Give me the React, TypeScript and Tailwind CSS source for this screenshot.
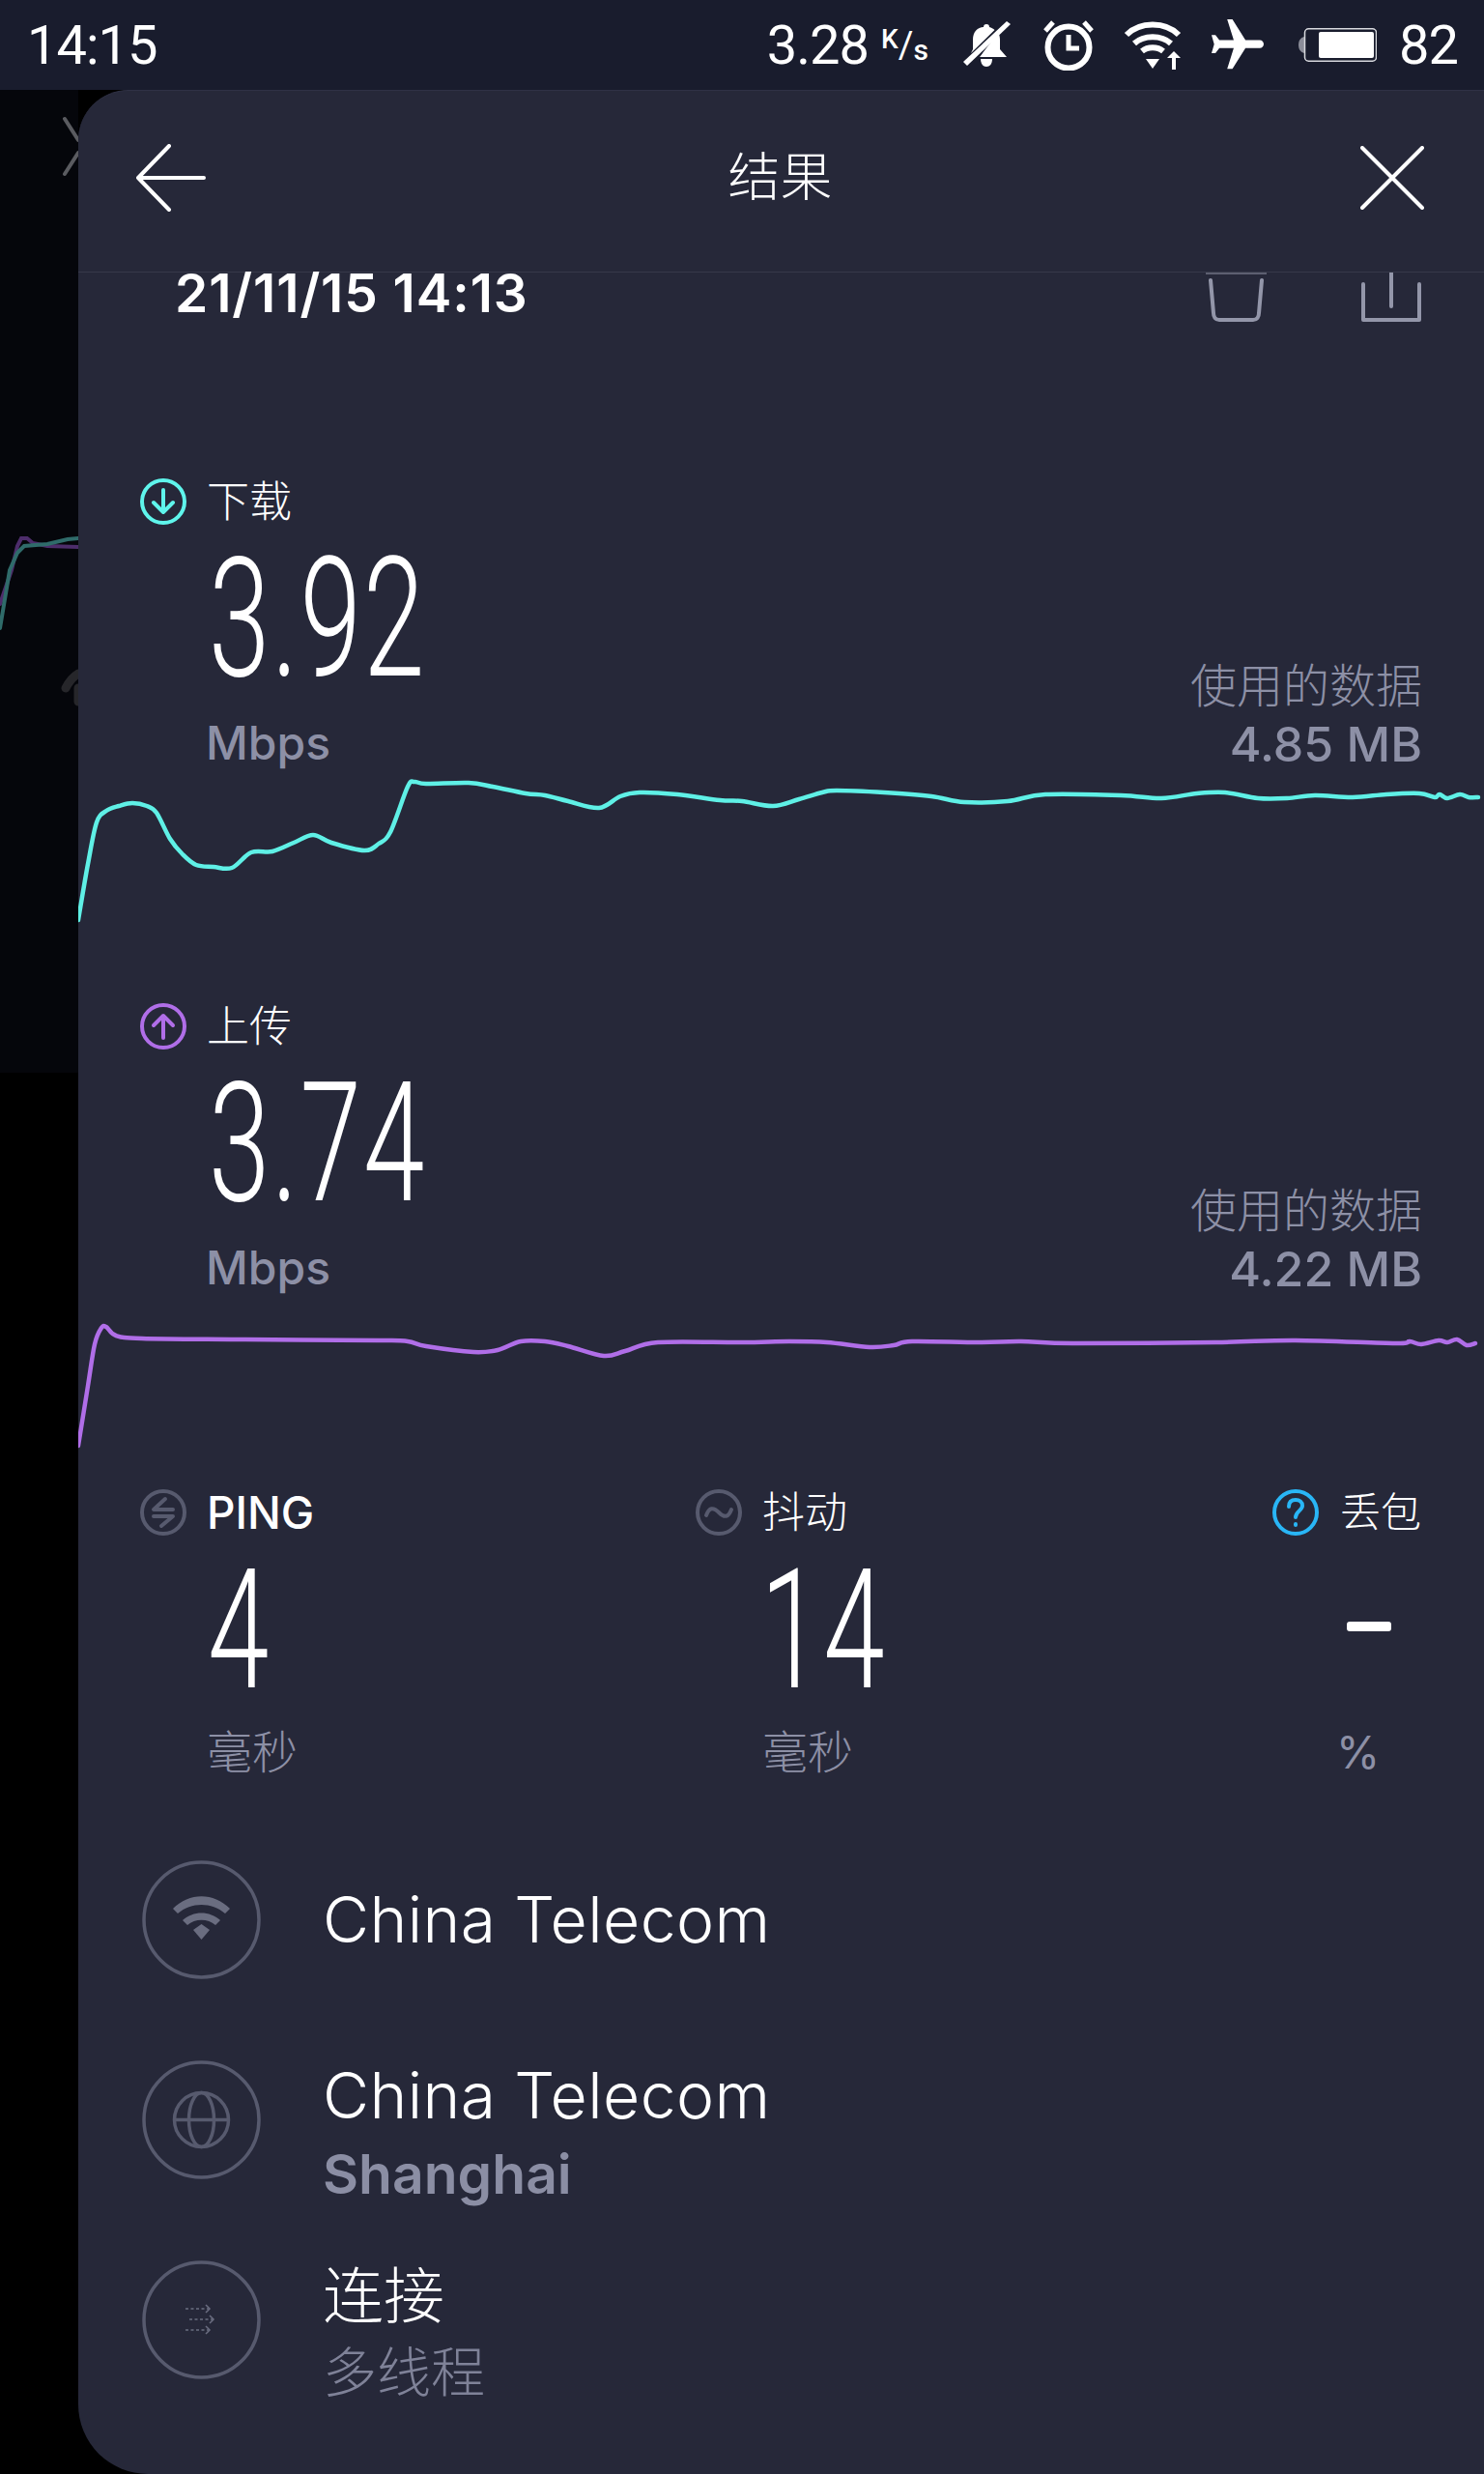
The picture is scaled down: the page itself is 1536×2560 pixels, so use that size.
import type { ReactNode } from 'react'

const DOWNLOAD_POINTS =
  '81,951 91,893 100,850 110,838 123,833 137,830 152,833 162,840 176,867 189,883 203,894 221,896 240,897 260,881 282,880 304,871 324,863 343,871 377,879 392,872 404,860 422,813 429,808 441,810 485,809 510,813 544,820 564,822 588,828 620,835 642,823 662,819 701,821 745,827 768,828 800,833 827,826 851,819 866,817 915,819 964,823 998,829 1043,828 1082,821 1160,822 1202,825 1239,820 1268,819 1302,825 1332,825 1361,822 1400,824 1435,821 1469,820 1485,824 1490,821 1498,825 1511,821 1520,824 1530,824'

const UPLOAD_POINTS =
  '81,1495 91,1433 98,1390 105,1373 110,1372 120,1381 147,1384 245,1385 392,1386 422,1387 441,1392 490,1398 515,1396 539,1387 564,1387 588,1392 625,1402 647,1397 681,1388 768,1388 817,1387 856,1388 900,1393 925,1391 944,1387 1013,1388 1057,1387 1111,1389 1258,1388 1341,1386 1444,1389 1459,1387 1471,1390 1489,1386 1498,1388 1508,1385 1518,1391 1527,1389'

// catmull-rom through the sampled points so the curve has no corners
function smoothPath(points: string) {
  const p = points.split(' ').map((s) => s.split(',').map(Number))
  let d = `M${p[0][0]},${p[0][1]}`
  for (let i = 0; i < p.length - 1; i++) {
    const a = p[Math.max(i - 1, 0)]
    const b = p[i]
    const c = p[i + 1]
    const e = p[Math.min(i + 2, p.length - 1)]
    const c1x = b[0] + (c[0] - a[0]) / 6
    const c1y = b[1] + (c[1] - a[1]) / 6
    const c2x = c[0] - (e[0] - b[0]) / 6
    const c2y = c[1] - (e[1] - b[1]) / 6
    d += ` C${c1x.toFixed(1)},${c1y.toFixed(1)} ${c2x.toFixed(1)},${c2y.toFixed(1)} ${c[0]},${c[1]}`
  }
  return d
}

function RingIcon({ color, children }: { color: string; children: ReactNode }) {
  return (
    <svg viewBox="0 0 48 48" className="w-12 h-12 shrink-0" fill="none" stroke={color} strokeWidth="4" strokeLinecap="round" strokeLinejoin="round">
      <circle cx="24" cy="24" r="22" />
      {children}
    </svg>
  )
}

function BigNumber({ value }: { value: string }) {
  return (
    <div className="h-[123px] flex items-center">
      <span className="origin-left scale-x-[0.66] text-[173px] leading-[123px] font-['Roboto',sans-serif] font-[350] tracking-[3px] text-white whitespace-nowrap">
        {value}
      </span>
    </div>
  )
}

function Metric({ icon, label, value, used, viewBox, points, color }: { icon: ReactNode; label: string; value: string; used: string; viewBox: string; points: string; color: string }) {
  return (
    <section>
      <div className="flex justify-between items-end pl-16 pr-16">
        <div>
          <div className="flex items-center gap-[21px] h-12">
            {icon}
            <span className="text-[44px] font-light text-white leading-none">{label}</span>
          </div>
          <div className="ml-[71px] mt-[36px]">
            <BigNumber value={value} />
          </div>
          <div className="ml-[68px] mt-[45px] h-[48px] text-[48px] leading-[44px] font-medium text-[#8d90a6]">Mbps</div>
        </div>
        <div className="text-right text-[#8d90a6] pb-[3px]">
          <div className="text-[48px] leading-[48px] font-light">使用的数据</div>
          <div className="mt-[14px] text-[50px] leading-[44px] font-medium">{used}</div>
        </div>
      </div>
      <svg viewBox={viewBox} className="block mt-[6px] w-[1455px] h-40" fill="none">
        <path d={smoothPath(points)} stroke={color} strokeWidth="4.5" strokeLinejoin="round" strokeLinecap="round" />
      </svg>
    </section>
  )
}

function Stat({ icon, label, value, unit, className }: { icon: ReactNode; label: ReactNode; value: ReactNode; unit: string; className: string }) {
  return (
    <div className={className}>
      <div className="flex items-center gap-[21px] h-12">
        {icon}
        {label}
      </div>
      <div className="ml-[70px] mt-[37px]">{value}</div>
      <div className="ml-[69px] mt-[41px] h-[46px] text-[47px] leading-[46px] font-light text-[#8d90a6]">{unit}</div>
    </div>
  )
}

function InfoRow({ icon, title, titleClass, sub, subClass }: { icon: ReactNode; title: string; titleClass: string; sub?: string; subClass?: string }) {
  return (
    <div className="flex h-[122px] ml-[2px]">
      <svg viewBox="0 0 123 123" className="w-[123px] h-[123px] shrink-0" fill="none" stroke="#575a6e" strokeWidth="3.5">
        <circle cx="61.5" cy="61.5" r="59.5" />
        {icon}
      </svg>
      <div className={sub ? 'ml-16' : 'ml-16 self-center'}>
        <div className={titleClass}>{title}</div>
        {sub && <div className={subClass}>{sub}</div>}
      </div>
    </div>
  )
}

function StatusBar() {
  return (
    <div className="h-[93px] shrink-0 bg-[#191c2d] flex items-center text-white font-['Roboto',sans-serif] text-[56px] leading-none">
      <span className="ml-[28px] tracking-[-1px]">14:15</span>
      <span className="ml-auto tracking-[-1px]">3.28</span>
      <span className="ml-[13px] w-[48px] h-10 flex justify-between text-[28px] font-medium leading-none">
        <span className="self-start">K</span>
        <span className="self-center font-normal text-[38px]">/</span>
        <span className="self-end text-[30px]">s</span>
      </span>
      <svg viewBox="0 0 49 50" className="ml-[37px] w-[49px] h-[50px]" fill="white">
        <path d="M24 3c2 0 3 1 3 3 2 .5 4 1.500 5.500 3L8 33l2-4V19C10 11 15 6 21 6c0-2 1-3 3-3z" />
        <path d="M36 12c1.500 2 2 4.500 2 7v10l7 8H17z" />
        <path d="M18 39h12c0 5-2.500 8-6 8s-6-3-6-8z" />
        <path d="M0 42 45 0l4 3L4 46z" />
      </svg>
      <svg viewBox="0 0 52 52" className="ml-[34px] w-[52px] h-[52px]" fill="none" stroke="white">
        <circle cx="26" cy="28" r="21.500" strokeWidth="6" />
        <path d="M26 15v14h11" strokeWidth="5" />
        <path d="M2 11 10 2M50 11 42 2" strokeWidth="5" />
      </svg>
      <svg viewBox="0 0 60 50" className="ml-[31px] w-[60px] h-[50px]" fill="none" stroke="white" strokeWidth="6">
        <path d="M3 14C17 0 43 0 57 14" />
        <path d="M11 23c10-9 28-9 38 0" />
        <path d="M19 31c6-5 16-5 22 0" />
        <path d="M23 39h14l-7 10z" fill="white" stroke="none" />
        <path d="M52 50V37" strokeWidth="4" />
        <path d="M45 38l7-7 7 7z" fill="white" stroke="none" />
      </svg>
      <svg viewBox="2 2 20 20" className="ml-[31px] w-[54px] h-[54px] rotate-90" fill="white">
        <path d="M21 16v-2l-8-5V3.500c0-.83-.67-1.500-1.500-1.500S10 2.670 10 3.500V9l-8 5v2l8-2.500V19l-2 1.500V22l3.500-1 3.500 1v-1.500L13 19v-5.500l8 2.500z" />
      </svg>
      <svg viewBox="0 0 81 35" className="ml-[36px] w-[81px] h-[35px]" fill="none">
        <path d="M6 9C2 10 0 13 0 17.500S2 25 6 26z" fill="#8b8d99" />
        <rect x="6.500" y="0.750" width="74" height="33.500" rx="4" stroke="#d8d9de" strokeWidth="1.500" />
        <rect x="21" y="4" width="57" height="27" rx="2" fill="white" />
      </svg>
      <span className="ml-[23px] mr-[27px] tracking-[-1px]">82</span>
    </div>
  )
}

function BehindPanel() {
  return (
    <div className="w-[81px] shrink-0 relative bg-black">
      <div className="h-[1017px] bg-[#05060b]" />
      <svg viewBox="0 93 81 640" className="absolute left-0 top-0 w-[81px] h-[640px]" fill="none" strokeLinecap="round">
        <path d="M67,123 L81,145 M67,180 L81,158" stroke="#5a5b60" strokeWidth="4" />
        <path d="M0,625 L12,590 L18,565 L22,557 L28,557 L34,562 L49,565 L81,566" stroke="#4d2d6b" strokeWidth="4" />
        <path d="M0,650 L10,590 L18,572 L25,565 L49,563 L70,558 L81,557" stroke="#2f6b6a" strokeWidth="4" />
        <path d="M68,712 C72,704 76,700 81,697 M81,712 L81,726" stroke="#26262a" strokeWidth="9" />
      </svg>
    </div>
  )
}

export default function App() {
  return (
    <div className="w-[1536px] h-[2560px] flex flex-col overflow-hidden bg-black font-['Inter','Noto_Sans_CJK_SC',sans-serif]">
      <StatusBar />
      <div className="flex-1 flex min-h-0">
        <BehindPanel />
        <main className="flex-1 bg-[#262839] rounded-tl-[52px] rounded-bl-[72px] border-t border-[#2f3145] overflow-hidden">
          <header className="h-[188px] flex items-center justify-between border-b border-[#363949] pl-[60px] pr-[62px] pb-2">
            <svg viewBox="0 0 72 70" className="w-[72px] h-[70px]" fill="none" stroke="white" strokeWidth="4" strokeLinecap="round" strokeLinejoin="round">
              <path d="M34 2 2 35l32 33M2 35h68" />
            </svg>
            <span className="text-[54px] font-light text-white leading-none mr-[6px]">结果</span>
            <svg viewBox="0 0 66 66" className="w-[66px] h-[66px]" fill="none" stroke="white" strokeWidth="4" strokeLinecap="round">
              <path d="M2 2 64 64M64 2 2 64" />
            </svg>
          </header>

          <div className="h-[213px] flex items-start pl-[100px] pr-[65px]">
            <span className="mt-[1px] text-[55px] leading-[40px] font-semibold text-white tracking-[0.9px]">21/11/15 14:13</span>
            <svg viewBox="0 0 63 51" className="ml-auto w-[63px] h-[51px]" fill="none" stroke="#9396a9" strokeWidth="4" strokeLinecap="round" strokeLinejoin="round">
              <path d="M0 1h63" strokeWidth="1" />
              <path d="M5 8l3 34c0 4 2 7 6 7h35c4 0 6-3 6-7l3-34" />
            </svg>
            <svg viewBox="0 0 62 51" className="ml-[98px] w-[62px] h-[51px]" fill="none" stroke="#9396a9" strokeWidth="4" strokeLinecap="round">
              <path d="M2 12v37h58V12" strokeLinejoin="round" />
              <path d="M31 0v35" />
            </svg>
          </div>

          <Metric
            icon={
              <RingIcon color="#5ff5ec">
                <path d="M24 12v23M14 25l10 10 10-10" />
              </RingIcon>
            }
            label="下载"
            value="3.92"
            used="4.85 MB"
            viewBox="81 800 1455 160"
            points={DOWNLOAD_POINTS}
            color="#5ff0e6"
          />
          <div className="mt-[77px]">
            <Metric
              icon={
                <RingIcon color="#b06ee8">
                  <path d="M24 36V13M14 23l10-10 10 10" />
                </RingIcon>
              }
              label="上传"
              value="3.74"
              used="4.22 MB"
              viewBox="81 1343 1455 160"
              points={UPLOAD_POINTS}
              color="#b06ee8"
            />
          </div>

          <div className="mt-[37px] flex pl-16 pr-16">
            <Stat
              className="w-[575px]"
              icon={
                <RingIcon color="#575a6e">
                  <path d="M26 10 14 21h20M14 28h20L22 38" />
                </RingIcon>
              }
              label={<span className="text-[46px] font-medium text-white leading-none">PING</span>}
              value={<BigNumber value="4" />}
              unit="毫秒"
            />
            <Stat
              className="flex-1"
              icon={
                <RingIcon color="#575a6e">
                  <path d="M11 27c3-8 7-9 13-3s10 5 13-3" />
                </RingIcon>
              }
              label={<span className="text-[44px] font-light text-white leading-none">抖动</span>}
              value={
                <div className="-ml-[3px]">
                  <BigNumber value="14" />
                </div>
              }
              unit="毫秒"
            />
            <div className="w-[155px] shrink-0">
              <div className="flex items-center gap-[22px] h-12">
                <RingIcon color="#29b6f6">
                  <path d="M17 18c0-5 3-7 7-7s7 2 7 6c0 5-7 6-7 12M24 36v1" />
                </RingIcon>
                <span className="text-[42px] font-light text-white leading-none whitespace-nowrap">丢包</span>
              </div>
              <div className="mt-[35px] h-[123px] flex items-center pl-[77px] pb-[5px]">
                <div className="w-[46px] h-[10px] rounded-[3px] bg-white" />
              </div>
              <div className="ml-[66px] mt-[43px] h-[46px] text-[46px] leading-[46px] font-normal text-[#8d90a6]">%</div>
            </div>
          </div>

          <div className="mt-[89px] pl-16 flex flex-col gap-[85px]">
            <InfoRow
              title="China Telecom"
              titleClass="text-[66px] leading-[72px] font-light text-white tracking-[0.4px]"
              icon={
                <g fill="#6a6d80" stroke="none">
                  <path d="M32 50c17-17 42-17 59 0l-5 5c-14-12-35-12-49 0z" />
                  <path d="M42 62c11-10 28-10 39 0l-5 5c-8-7-21-7-29 0z" />
                  <path d="M53 72 61.500 66 70 72 61.500 82z" />
                </g>
              }
            />
            <InfoRow
              title="China Telecom"
              titleClass="text-[66px] leading-[72px] font-light text-white tracking-[0.4px]"
              sub="Shanghai"
              subClass="mt-[21px] text-[57px] leading-[50px] font-semibold text-[#8b8ea4]"
              icon={
                <g strokeWidth="3.500">
                  <circle cx="61.500" cy="61.500" r="28" />
                  <ellipse cx="61.500" cy="61.500" rx="13" ry="28" />
                  <path d="M34 61.500h55" />
                </g>
              }
            />
            <InfoRow
              title="连接"
              titleClass="text-[63px] leading-[72px] font-light text-white"
              sub="多线程"
              subClass="mt-[17px] text-[56px] leading-[54px] font-light text-[#7f8298]"
              icon={
                <g strokeWidth="1.500" stroke="#6a6d80">
                  <path d="M45 50h24" strokeDasharray="3 2.500" />
                  <path d="M49 61h24" strokeDasharray="3 2.500" />
                  <path d="M45 72h24" strokeDasharray="3 2.500" />
                  <path d="M66 46l4 4-4 4M70 57l4 4-4 4M66 68l4 4-4 4" />
                </g>
              }
            />
          </div>
        </main>
      </div>
    </div>
  )
}
